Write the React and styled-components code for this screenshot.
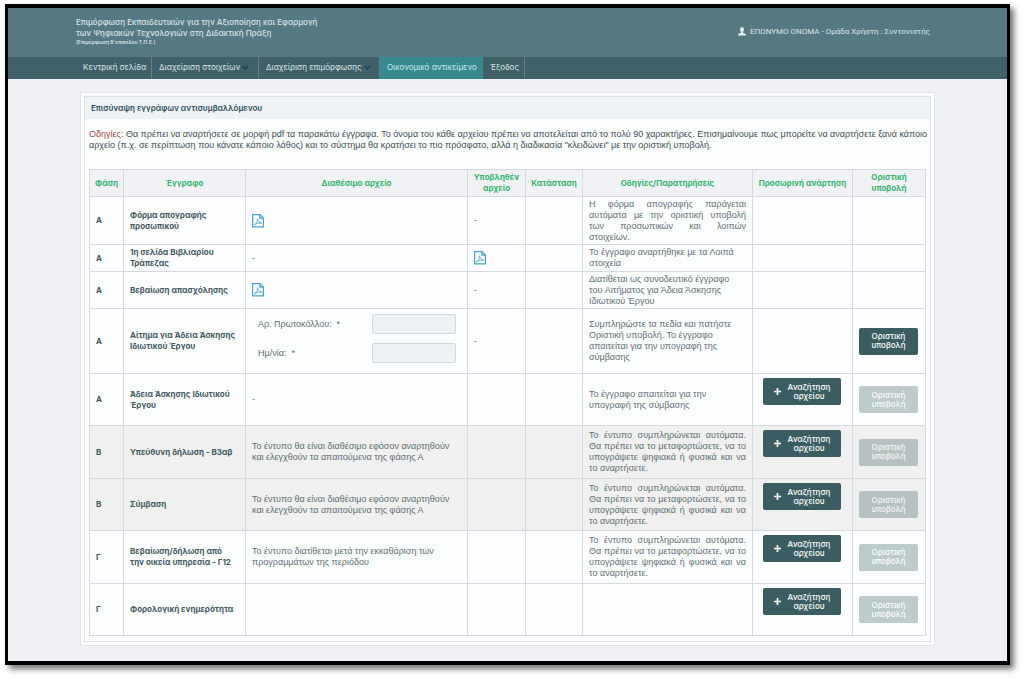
import React from 'react';
import styled, { createGlobalStyle } from 'styled-components';

const uiFont = 'Inter, "Liberation Sans", sans-serif';

const GlobalStyle = createGlobalStyle`
  *, *::before, *::after { box-sizing: border-box; }
  body {
    margin: 0;
    background: #fff;
    font-family: "Liberation Sans", Arial, sans-serif;
    font-size: 9px;
    line-height: 11px;
    color: #4d5d63;
  }
  button, input { font: inherit; }
`;

const Frame = styled.div`
  margin: 4px 13px 13px 5px;
  border: 4px solid #000;
  border-width: 4px 3px;
  background: #eff1f5;
  box-shadow: 4px 4px 6px rgba(0, 0, 0, 0.55);
  padding-bottom: 15px;
`;

const Header = styled.header`
  height: 49px;
  padding: 9px 77px 0 68px;
  background: #567981;
  display: flex;
  justify-content: space-between;
  color: #d7e4e6;
  font-size: 8px;
`;

const Brand = styled.h1`
  margin: 0;
  font-family: ${uiFont};
  font-size: 8px;
  line-height: 11px;
  font-weight: 500;
`;

const SubBrand = styled.small`
  display: block;
  font-size: 5px;
  line-height: 7px;
  font-weight: 600;
`;

const User = styled.div`
  display: flex;
  align-items: center;
  gap: 4px;
  height: 28px;
  font-family: Roboto, sans-serif;
`;

const Nav = styled.nav`
  height: 22px;
  padding-left: 68px;
  background: #3f6066;
  display: flex;
  font-family: ${uiFont};
  font-size: 8px;
`;

const NavLink = styled.a`
  width: ${(p) => p.$w}px;
  display: flex;
  align-items: center;
  gap: 2px;
  padding-left: 7px;
  padding-bottom: 2px;
  white-space: nowrap;
  text-decoration: none;
  color: ${(p) => (p.$active ? '#c9eeee' : '#dbe6e8')};
  background: ${(p) => (p.$active ? '#37898e' : 'transparent')};
  border-right: 1px solid ${(p) => (p.$active ? '#37898e' : '#648085')};
`;

const Panel = styled.main`
  margin: 13px 72px 0;
  padding: 3px;
  background: #fff;
  border: 1px solid #dfe3e9;
`;

const PanelInner = styled.section`
  border: 1px solid #dbe1e8;
  background: #fcfdfe;
  padding-bottom: 5px;
`;

const PanelTitle = styled.h2`
  margin: 0;
  height: 22px;
  padding-left: 6px;
  background: #eef3f7;
  color: #2a4c56;
  font-family: ${uiFont};
  font-size: 8px;
  line-height: 22px;
  font-weight: 600;
`;

const Instructions = styled.p`
  margin: 10px 0 18px 4px;
  color: #3c4d53;
`;

const Lead = styled.span`
  color: #9c4a3e;
`;

const TableWrap = styled.div`
  padding: 0 4px;
`;

const Table = styled.table`
  width: 100%;
  table-layout: fixed;
  border-collapse: collapse;
`;

const Th = styled.th`
  height: 27px;
  padding: 0 2px;
  border: 1px solid #d3d9dc;
  background: #f0f2f5;
  color: #35b270;
  font-family: ${uiFont};
  font-size: 8px;
  font-weight: 700;
`;

const Row = styled.tr`
  height: ${(p) => p.$h}px;
  background: ${(p) => (p.$shaded ? '#f0f0f0' : 'transparent')};
`;

const Td = styled.td`
  padding: 0 6px;
  border: 1px solid #d3d9dc;
  vertical-align: middle;
  text-align: ${(p) => (p.$justify ? 'justify' : 'left')};
  color: #5f6e73;
`;

const StrongTd = styled(Td)`
  color: #42595e;
  font-family: ${uiFont};
  font-size: 8px;
  font-weight: 700;
`;

const UploadCell = styled(Td)`
  padding: 4px 11px 0 10px;
  vertical-align: top;
`;

const SubmitCell = styled(Td)`
  padding: 0 7px 0 6px;
`;

const ActionButton = styled.button`
  width: 100%;
  height: 27px;
  padding: 0;
  border: 0;
  border-radius: 2px;
  display: flex;
  align-items: center;
  justify-content: center;
  gap: 7px;
  background: #3b5c61;
  color: #fff;
  font-family: ${uiFont};
  font-size: 8px;
  font-weight: 500;
  line-height: 9px;
  text-align: center;
  &:disabled {
    background: #3b6461;
    opacity: 0.32;
  }
`;

const Fields = styled.div`
  display: grid;
  grid-template-columns: 1fr 84px;
  align-items: center;
  row-gap: 9px;
  padding: 0 5px 5px 6px;
`;

const Input = styled.input`
  width: 100%;
  height: 20px;
  padding: 0 4px;
  border: 1px solid #ced9e3;
  border-radius: 2px;
  background: #edf2f7;
`;

const FileLink = styled.a`
  display: inline-flex;
  vertical-align: middle;
`;

const PdfIcon = () => (
  <FileLink href="#pdf" aria-label="PDF">
    <svg width="12" height="14" viewBox="0 0 12 14" fill="none" stroke="#4a9fcb" strokeWidth="1.2">
      <path d="M.6.6H8L11.4 4V12.8H.6Z" />
      <path d="M7.8.8V4.2H11.2" />
      <path d="M2.4 11C4.2 10 5.6 7.2 5.5 4.8C6 7.2 7.4 8.9 9.8 9.2C7.4 8.6 4.8 9.2 2.4 11Z" strokeWidth=".8" />
    </svg>
  </FileLink>
);

const UserIcon = () => (
  <svg width="8" height="9" viewBox="0 0 8 9" fill="#e8f0f1">
    <ellipse cx="4" cy="2.6" rx="2" ry="2.5" />
    <path d="M3 4.5H5V5.8L7.6 6.9Q8 7.2 8 8.6H0Q0 7.2 .4 6.9L3 5.8Z" />
  </svg>
);

const Chevron = () => (
  <svg width="7" height="5" viewBox="0 0 7 5" fill="none" stroke="#174852" strokeWidth="1.6">
    <path d="M.7 1L3.5 3.7L6.3 1" />
  </svg>
);

const Plus = () => (
  <svg width="7" height="7" viewBox="0 0 7 7" stroke="#fff" strokeWidth="1.7">
    <path d="M3.5 0V7M0 3.5H7" />
  </svg>
);

const AUTO_FORM =
  'Το έντυπο συμπληρώνεται αυτόματα. Θα πρέπει να το μεταφορτώσετε, να το υπογράψετε ψηφιακά ή φυσικά και να το αναρτήσετε.';
const AFTER_PHASE_A = 'Το έντυπο θα είναι διαθέσιμο εφόσον αναρτηθούν και ελεγχθούν τα απαιτούμενα της φάσης Α';

const columns = [
  ['Φάση', 34],
  ['Έγγραφο', 122],
  ['Διαθέσιμο αρχείο', null],
  ['Υποβληθέν αρχείο', 58],
  ['Κατάσταση', 57],
  ['Οδηγίες/Παρατηρήσεις', 170],
  ['Προσωρινή ανάρτηση', 100],
  ['Οριστική υποβολή', 73],
];

const rows = [
  { phase: 'Α', h: 48, doc: 'Φόρμα απογραφής προσωπικού', file: <PdfIcon />, sent: '-', justify: true,
    notes: 'Η φόρμα απογραφής παράγεται αυτόματα με την οριστική υποβολή των\u00a0προσωπικών και λοιπών στοιχείων.' },
  { phase: 'Α', h: 27, doc: '1η σελίδα Βιβλιαρίου Τράπεζας', file: '-', sent: <PdfIcon />,
    notes: 'Το έγγραφο αναρτήθηκε με τα Λοιπά στοιχεία' },
  { phase: 'Α', h: 37, doc: 'Βεβαίωση απασχόλησης', file: <PdfIcon />, sent: '-',
    notes: 'Διατίθεται ως συνοδευτικό έγγραφο του\u00a0Αιτήματος για Άδεια Άσκησης Ιδιωτικού\u00a0Έργου' },
  { phase: 'Α', h: 65, doc: 'Αίτημα για Άδεια Άσκησης Ιδιωτικού Έργου', fields: true, sent: '-', submit: 'enabled',
    notes: 'Συμπληρώστε τα πεδία και πατήστε Οριστική υποβολή. Το έγγραφο απαιτείται για την υπογραφή της σύμβασης' },
  { phase: 'Α', h: 52, doc: 'Άδεια Άσκησης Ιδιωτικού Έργου', file: '-', upload: true, submit: 'disabled',
    notes: 'Το έγγραφο απαιτείται για την υπογραφή της σύμβασης' },
  { phase: 'Β', h: 53, shaded: true, doc: 'Υπεύθυνη δήλωση - Β3αβ', file: AFTER_PHASE_A, justify: true,
    notes: AUTO_FORM, upload: true, submit: 'disabled' },
  { phase: 'Β', h: 52, shaded: true, doc: 'Σύμβαση', file: AFTER_PHASE_A, justify: true,
    notes: AUTO_FORM, upload: true, submit: 'disabled' },
  { phase: 'Γ', h: 53, doc: 'Βεβαίωση/δήλωση από την\u00a0οικεία υπηρεσία - Γ12',
    file: 'Το έντυπο διατίθεται μετά την εκκαθάριση των προγραμμάτων της περιόδου', justify: true,
    notes: AUTO_FORM, upload: true, submit: 'disabled' },
  { phase: 'Γ', h: 52, doc: 'Φορολογική ενημερότητα', upload: true, submit: 'disabled' },
];

const RequestFields = () => (
  <Fields>
    <label htmlFor="protocol">Αρ. Πρωτοκόλλου: &nbsp;*</label>
    <Input id="protocol" type="text" />
    <label htmlFor="date">Ημ/νία: &nbsp;*</label>
    <Input id="date" type="text" />
  </Fields>
);

export default function App() {
  return (
    <>
      <GlobalStyle />
      <Frame>
        <Header>
          <Brand>
            Επιμόρφωση Εκπαιδευτικών για την Αξιοποίηση και Εφαρμογή
            <br />
            των Ψηφιακών Τεχνολογιών στη Διδακτική Πράξη
            <SubBrand>(Επιμόρφωση Β΄επιπέδου Τ.Π.Ε.)</SubBrand>
          </Brand>
          <User>
            <UserIcon />
            ΕΠΩΝΥΜΟ ΟΝΟΜΑ - Ομάδα Χρήστη : Συντονιστής
          </User>
        </Header>
        <Nav>
          <NavLink href="#home" $w={76}>Κεντρική σελίδα</NavLink>
          <NavLink href="#data" $w={107}>Διαχείριση στοιχείων<Chevron /></NavLink>
          <NavLink href="#training" $w={121}>Διαχείριση επιμόρφωσης<Chevron /></NavLink>
          <NavLink href="#finance" $w={103} $active>Οικονομικό αντικείμενο</NavLink>
          <NavLink href="#exit" $w={42}>Έξοδος</NavLink>
        </Nav>
        <Panel>
          <PanelInner>
            <PanelTitle>Επισύναψη εγγράφων αντισυμβαλλόμενου</PanelTitle>
            <Instructions>
              <Lead>Οδηγίες</Lead>: Θα πρέπει να αναρτήσετε σε μορφή pdf τα παρακάτω έγγραφα. Το όνομα του κάθε
              αρχείου πρέπει να αποτελείται από το πολύ 90 χαρακτήρες. Επισημαίνουμε πως μπορείτε να αναρτήσετε ξανά
              κάποιο αρχείο (π.χ. σε περίπτωση που κάνατε κάποιο λάθος) και το σύστημα θα κρατήσει το πιο πρόσφατο,
              αλλά η διαδικασία "κλειδώνει" με την οριστική υποβολή.
            </Instructions>
            <TableWrap>
              <Table>
                <colgroup>
                  {columns.map(([name, w]) => <col key={name} width={w || undefined} />)}
                </colgroup>
                <thead>
                  <tr>{columns.map(([name]) => <Th key={name} scope="col">{name}</Th>)}</tr>
                </thead>
                <tbody>
                  {rows.map((r) => (
                    <Row key={r.doc} $h={r.h} $shaded={r.shaded}>
                      <StrongTd>{r.phase}</StrongTd>
                      <StrongTd>{r.doc}</StrongTd>
                      <Td>{r.fields ? <RequestFields /> : r.file}</Td>
                      <Td>{r.sent}</Td>
                      <Td />
                      <Td $justify={r.justify}>{r.notes}</Td>
                      <UploadCell>
                        {r.upload && (
                          <ActionButton type="button"><Plus /><span>Αναζήτηση<br />αρχείου</span></ActionButton>
                        )}
                      </UploadCell>
                      <SubmitCell>
                        {r.submit && (
                          <ActionButton type="button" disabled={r.submit === 'disabled'}>
                            Οριστική<br />υποβολή
                          </ActionButton>
                        )}
                      </SubmitCell>
                    </Row>
                  ))}
                </tbody>
              </Table>
            </TableWrap>
          </PanelInner>
        </Panel>
      </Frame>
    </>
  );
}
